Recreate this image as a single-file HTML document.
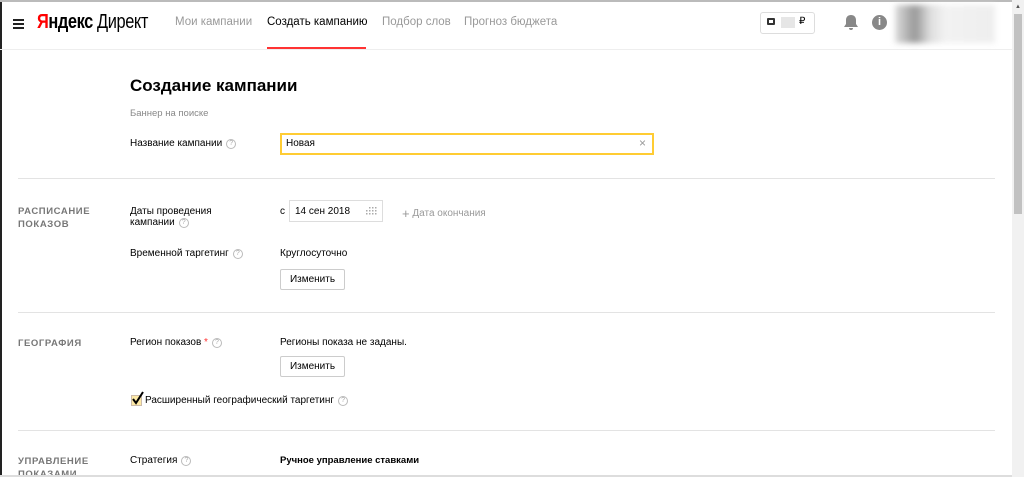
<!DOCTYPE html>
<html><head><meta charset="utf-8"><style>
*{margin:0;padding:0;box-sizing:border-box}
body{width:1024px;height:477px;overflow:hidden;background:#fff;font-family:"Liberation Sans","Noto Sans CJK SC",sans-serif;color:#000;position:relative}
.a{position:absolute;white-space:nowrap}
.f{font-size:10px}
.q{display:inline-block;width:10px;height:10px;border:1px solid #bbb;border-radius:50%;font-size:7px;color:#aaa;text-align:center;line-height:8px;vertical-align:1px;margin-left:4px}
.sec{font-size:9.5px;font-weight:bold;color:#777;letter-spacing:.6px;line-height:13px}
.hr{position:absolute;left:18px;width:977px;height:1px;background:#e3e3e3}
.btn{position:absolute;border:1px solid #ccc;border-radius:2px;font-size:10px;text-align:center;background:#fff}
.nav{font-size:11.5px;color:#999;top:16px}
</style></head><body>
<div class="a" style="left:0;top:0;width:2px;height:477px;background:#222"></div>
<div class="a" style="left:0;top:0;width:1024px;height:2px;background:#bbb"></div>
<div class="a" style="left:1012px;top:0;width:12px;height:477px;background:#f1f1f1"></div>
<div class="a" style="left:1014px;top:14px;width:8px;height:200px;background:#c1c1c1"></div>
<div class="a" style="left:1015px;top:4px;font-size:6px;color:#555">▲</div>
<div class="a" style="left:0;top:49px;width:1012px;height:1px;background:#eee"></div>
<div class="a" style="left:13px;top:19px;width:11px;height:2px;background:#222;box-shadow:0 4px 0 #222,0 8px 0 #222"></div>
<div class="a" style="left:37px;top:11px;font-size:20px;letter-spacing:-0.5px;transform:scaleX(.82);transform-origin:left"><b><span style="color:#f00">Я</span>ндекс</b> Директ</div>
<div class="a nav" style="left:175px">Мои кампании</div>
<div class="a nav" style="left:267px;color:#000">Создать кампанию</div>
<div class="a" style="left:267px;top:47px;width:99px;height:2px;background:#f33"></div>
<div class="a nav" style="left:382px">Подбор слов</div>
<div class="a nav" style="left:464px">Прогноз бюджета</div>
<div class="a" style="left:760px;top:12px;width:55px;height:22px;border:1px solid #ddd;border-radius:3px"></div>
<div class="a" style="left:767px;top:18px;width:8px;height:7px;border:2px solid #333;border-radius:1px"></div>
<div class="a" style="left:781px;top:17px;width:14px;height:11px;background:#e6e6e6"></div>
<div class="a" style="left:799px;top:16px;font-size:10px">₽</div>
<svg class="a" style="left:843px;top:14px" width="16" height="17" viewBox="0 0 16 17"><path d="M8 1c-3 0-5 2-5 5v4l-2 3h14l-2-3V6c0-3-2-5-5-5zM6 14a2 2 0 0 0 4 0z" fill="#888"/></svg>
<div class="a" style="left:872px;top:15px;width:15px;height:15px;border-radius:50%;background:#888;color:#fff;font-size:11px;font-weight:bold;text-align:center;line-height:15px">i</div>
<div class="a" style="left:895px;top:5px;width:100px;height:38px;background:linear-gradient(90deg,#ddd,#bbb 10%,#999 20%,#ddd 35%,#f2f2f2 50%,#eee 100%);filter:blur(3px)"></div>

<div class="a" style="left:130px;top:76px;font-size:17px;font-weight:bold">Создание кампании</div>
<div class="a f" style="left:130px;top:108px;color:#888;font-size:9.5px">Баннер на поиске</div>
<div class="a f" style="left:130px;top:138px">Название кампании<span class="q">?</span></div>
<div class="a" style="left:280px;top:133px;width:374px;height:22px;border:2px solid #fc3"></div>
<div class="a f" style="left:286px;top:138px">Новая</div>
<div class="a" style="left:639px;top:136px;font-size:12px;color:#999">×</div>

<div class="hr" style="top:178px"></div>
<div class="a sec" style="left:18px;top:205px">РАСПИСАНИЕ<br>ПОКАЗОВ</div>
<div class="a f" style="left:130px;top:206px;line-height:11px">Даты проведения<br>кампании<span class="q">?</span></div>
<div class="a f" style="left:280px;top:206px">с</div>
<div class="a" style="left:289px;top:200px;width:94px;height:22px;border:1px solid #ddd"></div>
<div class="a f" style="left:295px;top:206px">14 сен 2018</div>
<svg class="a" style="left:366px;top:207px" width="11" height="8"><g fill="#aaa"><rect x="0" y="3" width="1.5" height="1.5"/><rect x="3" y="0" width="1.5" height="1.5"/><rect x="6" y="0" width="1.5" height="1.5"/><rect x="9" y="0" width="1.5" height="1.5"/><rect x="3" y="3" width="1.5" height="1.5"/><rect x="6" y="3" width="1.5" height="1.5"/><rect x="9" y="3" width="1.5" height="1.5"/><rect x="0" y="6" width="1.5" height="1.5"/><rect x="3" y="6" width="1.5" height="1.5"/><rect x="6" y="6" width="1.5" height="1.5"/><rect x="9" y="6" width="1.5" height="1.5"/></g></svg>
<div class="a f" style="left:402px;top:206px;color:#999"><span style="font-size:13px;vertical-align:-2px">+</span> Дата окончания</div>
<div class="a f" style="left:130px;top:248px">Временной таргетинг<span class="q">?</span></div>
<div class="a f" style="left:280px;top:248px">Круглосуточно</div>
<div class="btn" style="left:280px;top:269px;width:65px;height:21px;line-height:19px">Изменить</div>

<div class="hr" style="top:312px"></div>
<div class="a sec" style="left:18px;top:337px">ГЕОГРАФИЯ</div>
<div class="a f" style="left:130px;top:337px">Регион показов <span style="color:#f33">*</span><span class="q">?</span></div>
<div class="a f" style="left:280px;top:337px">Регионы показа не заданы.</div>
<div class="btn" style="left:280px;top:356px;width:65px;height:21px;line-height:19px">Изменить</div>
<div class="a" style="left:131px;top:395px;width:11px;height:11px;background:#fde9a6;border:1px solid #cba"></div>
<svg class="a" style="left:131px;top:391px" width="13" height="14"><path d="M2 8l3 4 7-11" stroke="#000" stroke-width="2" fill="none"/></svg>
<div class="a f" style="left:145px;top:395px">Расширенный географический таргетинг<span class="q">?</span></div>

<div class="hr" style="top:430px"></div>
<div class="a sec" style="left:18px;top:455px">УПРАВЛЕНИЕ<br>ПОКАЗАМИ</div>
<div class="a f" style="left:130px;top:455px">Стратегия<span class="q">?</span></div>
<div class="a" style="left:280px;top:455px;font-weight:bold;font-size:9.5px">Ручное управление ставками</div>
<div class="a" style="left:0;top:475px;width:1012px;height:2px;background:#ddd"></div>
</body></html>
